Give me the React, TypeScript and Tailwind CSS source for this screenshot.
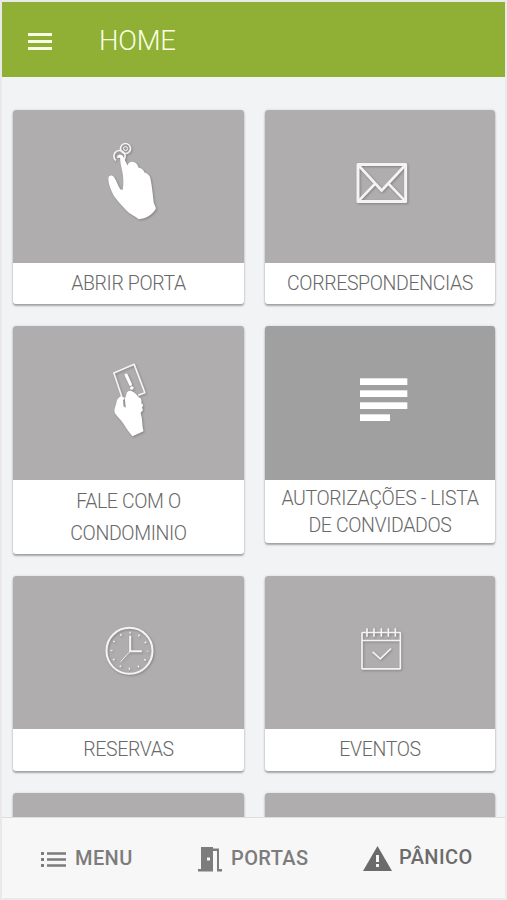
import type { ReactNode } from "react";

interface Tile {
  label: ReactNode;
  icon: ReactNode;
  imageClass: string;
  labelClass: string;
}

const iconClass = "h-[100px] w-20 drop-shadow-[1px_1px_1px_rgba(0,0,0,0.25)]";

const TouchIcon = () => (
  <svg viewBox="-4.5 19.5 240 300" className={iconClass}>
    <g fill="none" stroke="#f4f4f4" strokeWidth="5">
      <circle cx="105" cy="57" r="15" />
      <circle cx="105" cy="57" r="6" strokeWidth="3" />
      <path d="M76 93a17 17 0 1 1 24-2" />
    </g>
    <path
      fill="#fff"
      d="M79 85c1-7 6-10 11-9 6 1 9 6 11 12l10 20c2-10 12-14 21-10 7 3 10 9 12 16 10 2 15 8 18 15 11 4 16 9 18 19 5 25 7 50 10 73 3 7 6 11 6 17-10 18-29 30-51 31-12-10-27-15-38-27-18-20-34-34-43-55-6-14-12-31-10-43 2-7 12-8 17-1 9 12 11 27 19 37l7 1c2-16 2-32 0-46-2-17-9-34-8-50z"
    />
  </svg>
);

const MailIcon = () => (
  <svg viewBox="0 -40.5 240 300" className={iconClass}>
    <g fill="none" stroke="#f4f4f4" strokeWidth="8" strokeLinejoin="round">
      <rect x="54" y="45" width="143" height="111" strokeWidth="9" />
      <path d="M56 48l69 75 70-75M56 154l49-51M195 154l-49-51" />
    </g>
  </svg>
);

const CardHandIcon = () => (
  <svg viewBox="-4.5 9 240 300" className={iconClass}>
    <path
      d="M94 140L70 69l61-26 32 85-20 8"
      fill="none"
      stroke="#f4f4f4"
      strokeWidth="5"
      strokeLinejoin="round"
    />
    <path d="M107 75l13 28" stroke="#fff" strokeWidth="9" strokeLinecap="round" />
    <circle cx="124" cy="114" r="5.5" fill="#fff" />
    <path
      fill="#fff"
      d="M92 138c-10 5-14 13-15 24-3 9-7 19-4 27 7 12 18 20 26 32 8 14 17 25 27 38l33-15c-4-14-3-28-5-39-1-8-4-12-3-18 6-3 8-9 3-14 6-5 4-11-2-13 3-9 0-16-7-18-5-7-11-13-18-17-8-6-19-2-19 8l-5 13 3 27-7-4-1-18 5-7z"
    />
  </svg>
);

const SubjectIcon = () => (
  <svg viewBox="0 -21 240 300" className="h-[100px] w-20" fill="#fff">
    <rect x="60" y="55" width="142" height="20" />
    <rect x="60" y="91" width="142" height="20" />
    <rect x="60" y="127" width="142" height="20" />
    <rect x="60" y="163" width="90" height="20" />
  </svg>
);

const ClockIcon = () => (
  <svg viewBox="-19.5 -37.5 240 300" className={iconClass}>
    <g fill="none" stroke="#f4f4f4">
      <circle cx="102" cy="109" r="69" strokeWidth="6" />
      <circle cx="102" cy="109" r="54" strokeWidth="6" strokeDasharray="4 24.27" strokeDashoffset="2" />
      <path d="M104 64v46h35" strokeWidth="6" />
      <path d="M104 110l-29 32" strokeWidth="2.5" />
    </g>
  </svg>
);

const CalendarIcon = () => (
  <svg viewBox="-15 -37.5 240 300" className={iconClass}>
    <g fill="none" stroke="#f4f4f4" strokeWidth="5">
      <rect x="51" y="54" width="115" height="109" rx="2" />
      <path d="M51 78h115" />
      <path d="M66 41v26M87 41v26M109 41v26M130 41v26M151 41v26" />
      <path d="M83 112l23 21 32-31" />
    </g>
  </svg>
);

const plain = "h-[153px] pb-px bg-[#afadad]";

const tiles: Tile[] = [
  {
    label: "ABRIR PORTA",
    icon: <TouchIcon />,
    imageClass: plain,
    labelClass: "h-[41px] leading-[42px]",
  },
  {
    label: "CORRESPONDENCIAS",
    icon: <MailIcon />,
    imageClass: plain,
    labelClass: "h-[41px] leading-[42px]",
  },
  {
    label: <>FALE COM O<br />CONDOMINIO</>,
    icon: <CardHandIcon />,
    imageClass: "h-[154px] bg-[#afadad]",
    labelClass: "h-[74px] pt-[6px] leading-8",
  },
  {
    label: <>AUTORIZAÇÕES - LISTA<br />DE CONVIDADOS</>,
    icon: <SubjectIcon />,
    imageClass: "h-[154px] bg-[#a1a0a0]",
    labelClass: "h-[63px] pt-[5px] leading-[27px]",
  },
  {
    label: "RESERVAS",
    icon: <ClockIcon />,
    imageClass: plain,
    labelClass: "h-[42px] leading-[42px]",
  },
  {
    label: "EVENTOS",
    icon: <CalendarIcon />,
    imageClass: plain,
    labelClass: "h-[42px] leading-[42px]",
  },
  { label: "", icon: null, imageClass: plain, labelClass: "h-[42px]" },
  { label: "", icon: null, imageClass: plain, labelClass: "h-[42px]" },
];

const TileCard = ({ tile }: { tile: Tile }) => (
  <div className="overflow-hidden rounded-[3px] bg-white shadow-[0_2px_2px_rgba(0,0,0,0.3),0_0_3px_rgba(0,0,0,0.12)]">
    <div className={`flex items-center justify-center ${tile.imageClass}`}>{tile.icon}</div>
    <div
      className={`text-center text-[19.5px] font-light tracking-[-0.37px] whitespace-nowrap text-[#686868] ${tile.labelClass}`}
    >
      {tile.label}
    </div>
  </div>
);

const App = () => (
  <div className="h-[900px] w-[507px] overflow-hidden bg-[#e9e9ea] p-[2px] font-['Roboto',sans-serif]">
    <div className="flex h-full flex-col bg-[#f1f3f5]">
      <header className="flex h-[75px] shrink-0 items-center bg-[#90af35] pl-[26px] text-[#f8ffe4]">
        <svg viewBox="0 0 24 17" className="mt-[3px] h-[17px] w-6" fill="currentColor">
          <rect width="24" height="3" />
          <rect y="7" width="24" height="3" />
          <rect y="14" width="24" height="3" />
        </svg>
        <h1 className="mt-[3px] ml-[47px] text-[27.5px] leading-none font-light tracking-[-0.2px]">HOME</h1>
      </header>

      <main className="min-h-0 flex-1 overflow-hidden pt-[33px] pr-[10px] pl-[11px]">
        <div className="grid grid-cols-[231px_230px] items-start gap-x-[21px] gap-y-[22px]">
          {tiles.map((tile, i) => (
            <TileCard key={i} tile={tile} />
          ))}
        </div>
      </main>

      <footer className="flex h-[81px] shrink-0 items-center border-t border-[#dedede] bg-[#f7f7f7] text-[20px] leading-6 font-medium tracking-[0.4px] text-[#7c7c7c]">
        <div className="flex items-center pl-[39px]">
          <svg viewBox="0 0 25 15" className="mt-[3px] h-[15px] w-[25px]" fill="currentColor">
            <path d="M0 0h3v3H0zM0 6h3v3H0zM0 12h3v3H0zM6 0.3h19v2.5H6zM6 6.3h19v2.5H6zM6 12.3h19v2.5H6z" />
          </svg>
          <span className="ml-[9px] w-[58px]">MENU</span>
        </div>
        <div className="ml-[65px] flex items-center">
          <svg viewBox="0 0 24 25" className="mt-[3px] h-[25px] w-6" fill="currentColor">
            <path
              fillRule="evenodd"
              d="M3 0h12v1.5h6V22h3v2.5h-5V4h-4v20.5H0V22h3zM9 10.5v3h3v-3z"
            />
          </svg>
          <span className="ml-[9px] w-[78px]">PORTAS</span>
        </div>
        <div className="ml-[54px] flex items-center text-[#6b6b6b]">
          <svg viewBox="0 0 29 25" className="h-[25px] w-[29px]">
            <path fill="currentColor" d="M14.5 0L29 25H0z" />
            <path fill="#f7f7f7" d="M13 9h3v7h-3zM13 18h3v3h-3z" />
          </svg>
          <span className="-mt-[3px] ml-[7px]">PÂNICO</span>
        </div>
      </footer>
    </div>
  </div>
);

export default App;
